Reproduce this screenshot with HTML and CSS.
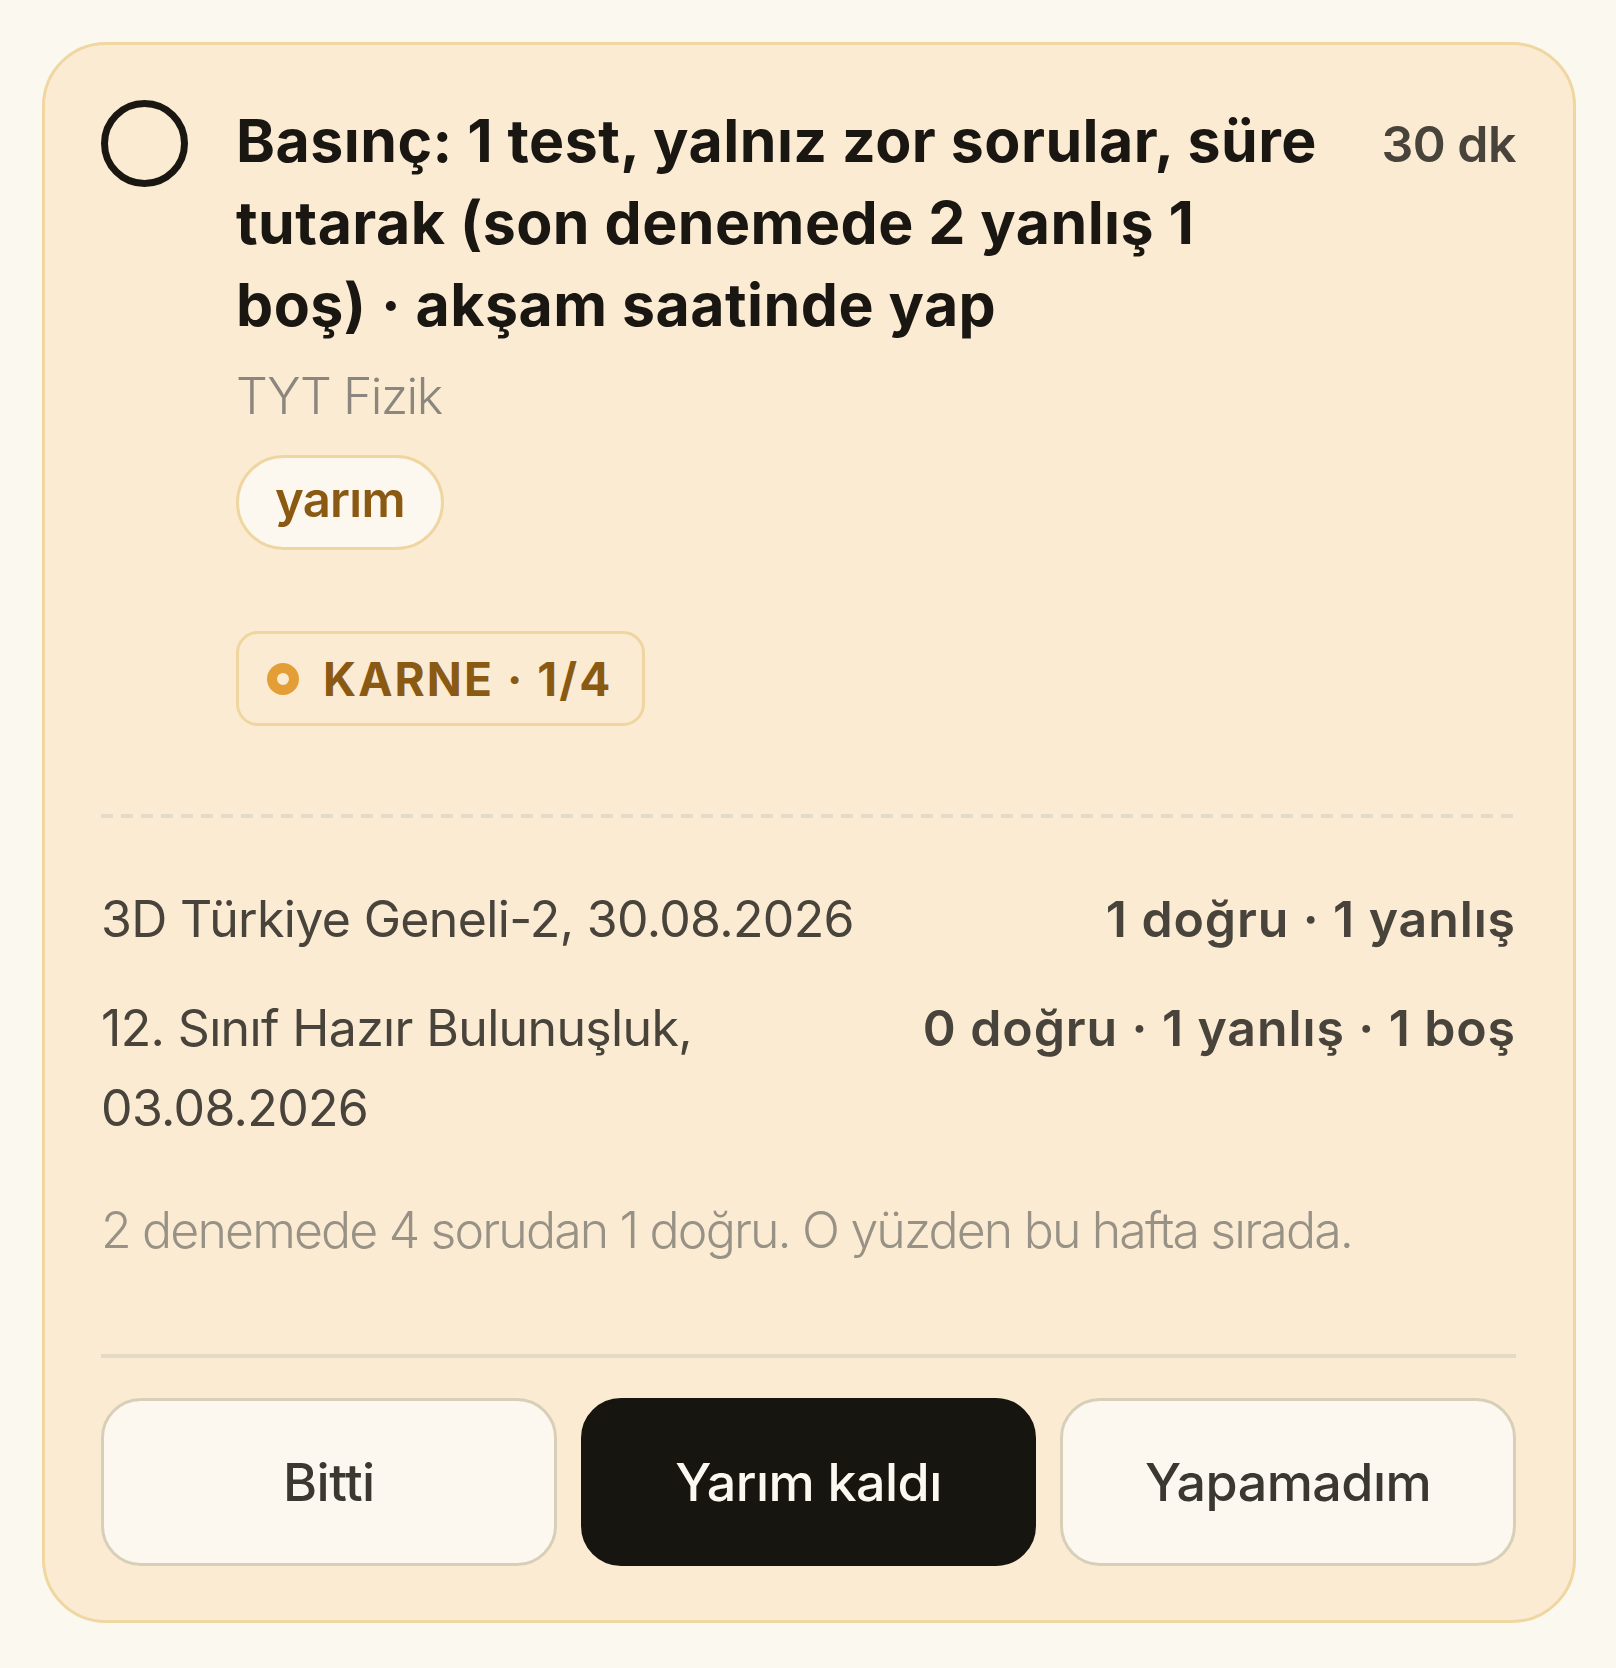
FILE: index.html
```html
<!DOCTYPE html>
<html lang="tr">
<head>
<meta charset="utf-8">
<title>Görev kartı</title>
<link rel="stylesheet" href="styles.css">
</head>
<body>
<div class="page">
  <article class="card">
    <header class="task">
      <span class="check" aria-hidden="true"></span>
      <div class="task-body">
        <h1 class="task-title">Basınç: 1 test, yalnız zor sorular, süre tutarak (son denemede 2 yanlış 1 boş) · akşam saatinde yap</h1>
        <div class="task-subject">TYT Fizik</div>
        <span class="pill">yarım</span>
        <div class="karne"><span class="karne-dot"></span><span class="karne-text">KARNE · 1/4</span></div>
      </div>
      <div class="task-time">30 dk</div>
    </header>

    <div class="dashed"></div>

    <ul class="results">
      <li class="result">
        <span class="result-name">3D Türkiye Geneli-2, 30.08.2026</span>
        <span class="result-score">1 doğru · 1 yanlış</span>
      </li>
      <li class="result">
        <span class="result-name">12. Sınıf Hazır Bulunuşluk, 03.08.2026</span>
        <span class="result-score">0 doğru · 1 yanlış · 1 boş</span>
      </li>
    </ul>

    <p class="note">2 denemede 4 sorudan 1 doğru. O yüzden bu hafta sırada.</p>

    <div class="solid"></div>

    <div class="actions">
      <button class="btn">Bitti</button>
      <button class="btn btn-dark">Yarım kaldı</button>
      <button class="btn">Yapamadım</button>
    </div>
  </article>
</div>
</body>
</html>
```

FILE: styles.css
```css
* { box-sizing: border-box; }

html, body {
  margin: 0;
  padding: 0;
  background: #fbf8f0;
}

body {
  font-family: Inter, "Noto Sans", sans-serif;
  color: #1a1712;
}

.page {
  padding: 42px 40px 40px 42px;
}

.card {
  background: #fbebd2;
  border: 3px solid #f0d6a0;
  border-radius: 64px;
  padding: 55px 57px 54px 56px;
}

.task {
  display: flex;
  align-items: flex-start;
}

.check {
  flex: 0 0 auto;
  width: 87px;
  height: 87px;
  border: 7px solid #1a1712;
  border-radius: 50%;
  margin-right: 48px;
}

.task-body {
  flex: 1 1 auto;
  min-width: 0;
  display: flex;
  flex-direction: column;
  align-items: flex-start;
}

.task-title {
  margin: 0;
  font-size: 59px;
  line-height: 82px;
  font-weight: 700;
  letter-spacing: 0.008em;
  color: #1a1712;
  max-width: 1094px;
}

.task-subject {
  margin-top: 15px;
  font-size: 50px;
  line-height: 70px;
  font-weight: 300;
  letter-spacing: -0.03em;
  color: #8c877e;
}

.pill {
  margin-top: 24px;
  height: 95px;
  padding: 0 36px 6px;
  display: inline-flex;
  align-items: center;
  border: 3px solid #efd6a0;
  border-radius: 48px;
  background: #fcf8ef;
  font-size: 49px;
  font-weight: 600;
  letter-spacing: -0.015em;
  color: #8a5912;
}

.karne {
  margin-top: 81px;
  height: 95px;
  padding: 0 30px 0 28px;
  display: inline-flex;
  align-items: center;
  gap: 24px;
  border: 3px solid #efd6a0;
  border-radius: 22px;
}

.karne-dot {
  width: 32px;
  height: 32px;
  border: 10px solid #e39f36;
  border-radius: 50%;
}

.karne-text {
  font-size: 46px;
  font-weight: 700;
  letter-spacing: 0.045em;
  color: #8a5912;
}

.task-time {
  flex: 0 0 auto;
  margin-left: 36px;
  margin-top: 3px;
  font-size: 50px;
  line-height: 82px;
  font-weight: 600;
  letter-spacing: -0.01em;
  color: #48433b;
}

.dashed {
  margin-top: 88px;
  height: 4px;
  background: repeating-linear-gradient(90deg, #e4dccb 0 12px, transparent 12px 20px);
}

.results {
  list-style: none;
  margin: 61px 0 0;
  padding: 0;
  display: flex;
  flex-direction: column;
  gap: 29px;
}

.result {
  display: flex;
  justify-content: space-between;
  align-items: flex-start;
  gap: 60px;
  font-size: 50px;
  line-height: 80px;
  color: #48433b;
}

.result-name {
  font-weight: 400;
  letter-spacing: -0.013em;
}

.result-score {
  flex: 0 0 auto;
  white-space: nowrap;
  font-weight: 600;
  letter-spacing: 0.018em;
}

.note {
  margin: 42px 0 0;
  font-size: 50px;
  line-height: 80px;
  font-weight: 300;
  letter-spacing: -0.037em;
  color: #989286;
}

.solid {
  margin-top: 84px;
  height: 4px;
  background: #e3dbc8;
}

.actions {
  margin-top: 40px;
  display: grid;
  grid-template-columns: 1fr 1fr 1fr;
  gap: 24px;
}

.btn {
  height: 168px;
  border: 3px solid #d8cfb9;
  border-radius: 40px;
  background: #fcf8f0;
  font-family: Inter, "Noto Sans", sans-serif;
  font-size: 52px;
  font-weight: 500;
  letter-spacing: -0.01em;
  color: #3b3731;
  padding: 0;
}

.btn-dark {
  background: #17150f;
  border-color: #17150f;
  color: #fbf8f0;
}
```
